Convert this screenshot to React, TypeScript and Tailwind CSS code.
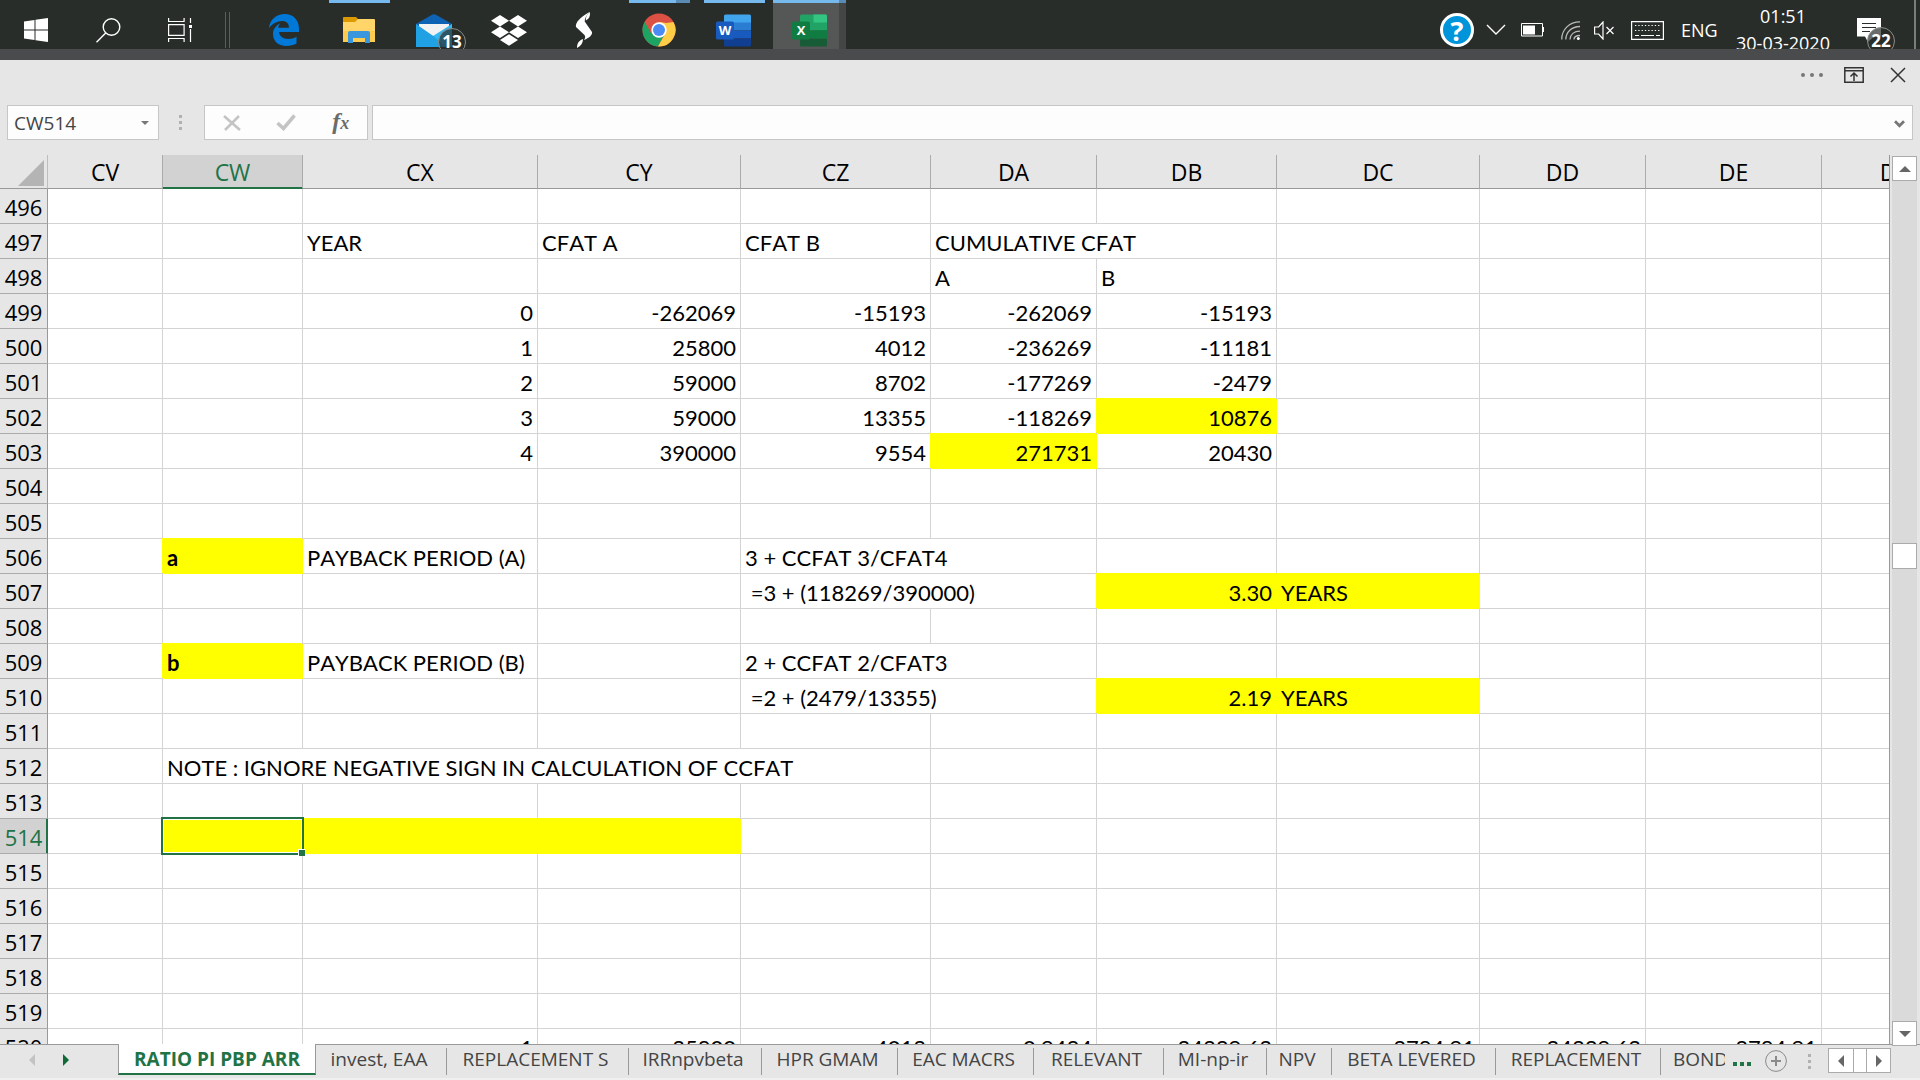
import React from "react";

type Cell = { t?: string; span?: number; right?: boolean; y?: boolean; bold?: boolean; sel?: boolean };

const columns = ["CV", "CW", "CX", "CY", "CZ", "DA", "DB", "DC", "DD", "DE", "DF"];

const n = (t: string): Cell => ({ t, right: true });

const cells: Record<number, Record<number, Cell>> = {
  497: { 2: { t: "YEAR" }, 3: { t: "CFAT A" }, 4: { t: "CFAT B" }, 5: { t: "CUMULATIVE CFAT", span: 2 } },
  498: { 5: { t: "A" }, 6: { t: "B" } },
  499: { 2: n("0"), 3: n("-262069"), 4: n("-15193"), 5: n("-262069"), 6: n("-15193") },
  500: { 2: n("1"), 3: n("25800"), 4: n("4012"), 5: n("-236269"), 6: n("-11181") },
  501: { 2: n("2"), 3: n("59000"), 4: n("8702"), 5: n("-177269"), 6: n("-2479") },
  502: { 2: n("3"), 3: n("59000"), 4: n("13355"), 5: n("-118269"), 6: { t: "10876", right: true, y: true } },
  503: { 2: n("4"), 3: n("390000"), 4: n("9554"), 5: { t: "271731", right: true, y: true }, 6: n("20430") },
  506: { 1: { t: "a", y: true, bold: true }, 2: { t: "PAYBACK PERIOD (A)" }, 4: { t: "3 + CCFAT 3/CFAT4", span: 2 } },
  507: { 4: { t: "\u00a0=3 + (118269/390000)", span: 2 }, 6: { t: "3.30", right: true, y: true }, 7: { t: "YEARS", y: true } },
  509: { 1: { t: "b", y: true, bold: true }, 2: { t: "PAYBACK PERIOD (B)" }, 4: { t: "2 + CCFAT 2/CFAT3", span: 2 } },
  510: { 4: { t: "\u00a0=2 + (2479/13355)", span: 2 }, 6: { t: "2.19", right: true, y: true }, 7: { t: "YEARS", y: true } },
  512: { 1: { t: "NOTE : IGNORE NEGATIVE SIGN IN CALCULATION OF CCFAT", span: 4 } },
  514: { 1: { y: true, sel: true }, 2: { y: true }, 3: { y: true } },
  520: { 2: n("1"), 3: n("25800"), 4: n("4012"), 5: n("0.9434"), 6: n("24339.62"), 7: n("3784.91"), 8: n("24339.62"), 9: n("3784.91") },
};

const rowNumbers = Array.from({ length: 25 }, (_, i) => 496 + i);

function GridRow({ row }: { row: number }) {
  const data = cells[row] ?? {};
  const out: React.ReactNode[] = [];
  let c = 0;
  while (c < columns.length) {
    const cell = data[c] ?? {};
    const span = cell.span ?? 1;
    out.push(
      <td
        key={c}
        colSpan={span}
        className={
          "relative h-[35px] whitespace-nowrap border-b border-r px-1 pt-1 leading-[30px] " +
          (cell.y ? "border-[#ffff00] bg-[#ffff00] shadow-[-1px_-1px_0_0_#ffff00] " : "border-[#d4d4d4] ") +
          (cell.right ? "text-right " : "text-left ") +
          (cell.bold ? "font-bold" : "")
        }
      >
        {cell.t}
        {cell.sel && (
          <span className="absolute -bottom-0.5 -left-0.5 -right-0.5 -top-0.5 z-10 border-2 border-[#217346]">
            <span className="absolute inset-0 border border-white" />
            <span className="absolute -bottom-[3px] -right-[3px] size-[7px] border-l border-t border-white bg-[#217346]" />
          </span>
        )}
      </td>,
    );
    c += span;
  }
  const active = row === 514;
  return (
    <tr>
      <th
        scope="row"
        className={
          "h-[35px] border-b border-r px-0 pb-0 pt-0.5 text-center font-['Open_Sans'] text-[22px] font-normal leading-[30px] " +
          (active ? "border-b-[#ababab] border-r-[#217346] bg-[#d2d2d2] text-[#217346] shadow-[inset_-1px_0_0_0_#217346]" : "border-b-[#ababab] border-r-[#999999] bg-[#e6e6e6] text-black")
        }
      >
        {row}
      </th>
      {out}
    </tr>
  );
}

function Edge() {
  return (
    <svg viewBox="0 0 30 32" className="h-8 w-[30px]">
      <path fill="#0078d7" d="M0 14C1 5 8 0 15.500 0 24 0 30 6 30 14.500V18H10c.2 4 4 7 9 7 3.500 0 6-1 8.500-2.300V29.500C25 31 21 32 17.500 32 9 32 4 27 4 20c0-5 3-8.500 7-10.500-1 1.300-1.500 2.500-1.700 4.300H20C20 10 18 7 13.500 7 8 7 3 10 0 14z" />
    </svg>
  );
}

function Folder() {
  return (
    <svg viewBox="0 0 32 26" className="h-[26px] w-8">
      <path fill="#dd9a00" d="M0 1a1 1 0 011-1h12l2 2v4H0z" />
      <path fill="#ffd468" d="M0 5h12l3-3h16a1 1 0 011 1v22H0z" />
      <path fill="#fac33a" d="M0 14h32v11H0z" opacity=".5" />
      <path fill="#3a96dd" d="M5 16a2 2 0 012-2h18a2 2 0 012 2v10h-5v-5H10v5H5z" />
    </svg>
  );
}

function Mail() {
  return (
    <svg viewBox="0 0 36 33" className="h-[33px] w-9">
      <path fill="#0f63b5" d="M0 10L16.500.6a3 3 0 013 0L36 10v6H0z" />
      <path fill="#f2f2f2" d="M3 10h30v12H3z" />
      <path fill="#4cc9f5" d="M36 10v23H20z" />
      <path fill="#1fa1e4" d="M0 10l33 23H0z" />
      <path fill="#35b8f1" d="M36 10L17 22l13 11h6z" />
    </svg>
  );
}

function Dropbox() {
  return (
    <svg viewBox="0 0 36 31" className="h-[31px] w-9" fill="#fff">
      <path d="M9 0l9 5.700-9 5.800-9-5.800zM27 0l9 5.700-9 5.800-9-5.800zM9 11.500l9 5.800L9 23l-9-5.700zM27 11.500l9 5.800-9 5.700-9-5.700zM18 19.300l9 5.700-9 5.700L9 25z" />
    </svg>
  );
}

function Spark() {
  return (
    <svg viewBox="0 0 18 36" className="h-9 w-[18px]" fill="#fff">
      <path d="M14.500 0C12 3 9.500 6 9.700 9.500L17 20c.6 3-3 6-8 8 1.500-2 1.500-3.500.5-5L1 15C0 11 5 5 14.500 0z" />
      <path d="M2 36c0-4 1-7 6-9C8 31 6 34 2 36z" />
      <path d="M14.800 0c.7 4-.8 7-4 8.500C10.500 5 12 2 14.800 0z" />
    </svg>
  );
}

function Chrome() {
  return (
    <svg viewBox="0 0 34 34" className="size-[34px]">
      <circle cx="17" cy="17" r="16.500" fill="#dd5144" />
      <path fill="#1da462" d="M2.700 8.700A16.500 16.500 0 0016 33.500l6.500-12.300L17 17l-7.500 4z" />
      <path fill="#ffcd46" d="M17 9h14.500A16.500 16.500 0 0116 33.500l7-12.500z" />
      <path fill="#dd5144" d="M17 9h14.500l-7 1z" />
      <circle cx="17" cy="17" r="7.700" fill="#fff" />
      <circle cx="17" cy="17" r="6" fill="#4c8bf5" />
    </svg>
  );
}

function Office({ letter, shades, box }: { letter: string; shades: string[]; box: string }) {
  return (
    <svg viewBox="0 0 36 33" className="h-[33px] w-9">
      <path fill={shades[0]} d="M8 8V2a1.500 1.500 0 011.500-1.500h24A1.500 1.500 0 0135 2v7H8z" />
      <path fill={shades[1]} d="M8 8.500h27v8H8z" />
      <path fill={shades[2]} d="M8 16.500h27v8H8z" />
      <path fill={shades[3]} d="M8 24.500h27V31a1.500 1.500 0 01-1.500 1.500h-24A1.500 1.500 0 018 31z" />
      {letter === "X" && <path fill="#33c481" d="M21.500.5h12A1.500 1.500 0 0135 2v6.500H21.500z" />}
      {letter === "X" && <path fill="#107c41" d="M21.500 16.500H35v8H21.500z" />}
      <rect y="7.500" width="18" height="18" rx="1.500" fill={box} />
      <text x="9" y="21" textAnchor="middle" fontFamily="Open Sans, sans-serif" fontWeight="700" fontSize="13" fill="#fff">{letter}</text>
    </svg>
  );
}

const iconButton = "flex items-center justify-center";

function Badge({ children, className }: { children: string; className: string }) {
  return (
    <span className={"absolute flex size-7 items-center justify-center rounded-full border border-[#8a8d8b] bg-[#2a2e2b]/70 font-['Open_Sans'] text-[17px] font-bold leading-[24px] text-white " + className}>
      {children}
    </span>
  );
}

function Taskbar() {
  return (
    <header className="relative flex h-[49px] shrink-0 overflow-hidden bg-[#292d2a] text-white">
      <button aria-label="Start" className={iconButton + " h-[60px] w-[72px]"}>
        <svg viewBox="0 0 24 24" className="size-6" fill="#fff">
          <path d="M0 3.400L10.500 2v9.500H0zM11.500 1.800L24 0v11.500H11.500zM0 12.500h10.500V22L0 20.600zM11.500 12.500H24V24l-12.500-1.800z" />
        </svg>
      </button>
      <button aria-label="Search" className={iconButton + " h-[60px] w-[72px]"}>
        <svg viewBox="0 0 25 25" className="size-[25px]" fill="none" stroke="#fff" strokeWidth="1.400">
          <circle cx="15.500" cy="9" r="8.300" />
          <path d="M9.700 15L.5 24.300" />
        </svg>
      </button>
      <button aria-label="Task view" className={iconButton + " h-[60px] w-[72px]"}>
        <svg viewBox="0 0 25 24" className="h-6 w-[25px]" fill="none" stroke="#fff" strokeWidth="1.200">
          <path d="M.6 0v3.500h15.500V0M.6 24v-3.500h15.500V24M.6 6.600h15.500v10.800H.6zM22.500 0v5M22.500 11v13" />
          <path fill="#fff" stroke="none" d="M21 7h3v3h-3z" />
        </svg>
      </button>
      <div className="ml-[9px] mt-3 h-9 w-[5px] border-x border-[#5c5f5d]" />
      <nav aria-label="Pinned apps" className="ml-4 flex">
        <button aria-label="Edge" className={iconButton + " h-[60px] w-[75px]"}><Edge /></button>
        <button aria-label="File Explorer" className={iconButton + " relative h-[60px] w-[75px]"}>
          <Folder />
          <span className="absolute left-2 top-0 h-[3px] w-[61px] bg-[#76b9ed]" />
        </button>
        <button aria-label="Mail" className={iconButton + " relative h-[60px] w-[75px]"}>
          <Mail />
          <Badge className="bottom-1 right-[5px]">13</Badge>
        </button>
        <button aria-label="Dropbox" className={iconButton + " h-[60px] w-[75px]"}><Dropbox /></button>
        <button aria-label="Spark" className={iconButton + " h-[60px] w-[75px]"}><Spark /></button>
        <button aria-label="Chrome" className={iconButton + " relative h-[60px] w-[75px]"}>
          <Chrome />
          <span className="absolute left-2 top-0 h-[3px] w-[61px] border-r-[14px] border-[#5a8bb5] bg-[#76b9ed]" />
        </button>
        <button aria-label="Word" className={iconButton + " relative h-[60px] w-[75px]"}>
          <Office letter="W" box="#185abd" shades={["#41a5ee", "#2b7cd3", "#185abd", "#103f91"]} />
          <span className="absolute left-2 top-0 h-[3px] w-[61px] bg-[#76b9ed]" />
        </button>
        <button aria-label="Excel" className={iconButton + " relative ml-0.5 h-[60px] w-[73px] bg-[#545755] shadow-[inset_-7px_0_0_0_#434644]"}>
          <Office letter="X" box="#107c41" shades={["#21a366", "#21a366", "#107c41", "#185c37"]} />
          <span className="absolute left-0 top-0 h-[3px] w-[73px] border-r-[7px] border-[#5a8bb5] bg-[#76b9ed]" />
        </button>
      </nav>
      <div className="ml-auto flex h-[60px] items-center font-['Open_Sans'] text-[18px]">
        <button aria-label="Help" className={iconButton + " mr-3 size-[34px] rounded-full border-[3px] border-white bg-[#0095da] text-[27px] font-bold leading-none"}>?</button>
        <button aria-label="Show hidden icons" className="mr-[15px]">
          <svg viewBox="0 0 20 12" className="h-3 w-5" fill="none" stroke="#fff" strokeWidth="1.400"><path d="M1 1l9 9 9-9" /></svg>
        </button>
        <svg viewBox="0 0 24 14" className="mr-4 h-[14px] w-6" fill="none" stroke="#fff"><path d="M.5.5h21v12.500H.5zM22.500 4v5" /><path fill="#fff" stroke="none" d="M2 2.500h12v9H2z" /></svg>
        <svg viewBox="0 0 19 19" className="mr-[14px] size-[19px]" fill="none" stroke="#b9bbba" strokeWidth="1.300">
          <path d="M.8 18.500C.5 9 8 .8 19 .8M4.800 18.500C5 11 10.500 5.500 19 5.500M9 18.500c.3-5 4-8.300 10-8.300M13 18.500c0-2 2-4 6-4" />
          <circle cx="17.300" cy="17.500" r="1.500" fill="#fff" stroke="none" />
        </svg>
        <svg viewBox="0 0 21 19" className="mr-4 h-[19px] w-[21px]" fill="none" stroke="#fff" strokeWidth="1.200"><path d="M.6 6h4L9 1v17l-4.400-5H.6zM12.500 6l7 7M19.500 6l-7 7" /></svg>
        <svg viewBox="0 0 33 19" className="mr-[17px] h-[19px] w-[33px]" fill="none" stroke="#fff" strokeWidth="1.200">
          <path d="M.6.6h31.800v17.800H.6z" />
          <path strokeDasharray="1.300 2" d="M4 4.500h25.500M4 9.500h25.500" />
          <path d="M4 14.500h4M10 14.500h13M25 14.500h4" />
        </svg>
        <span className="w-[35px]">ENG</span>
        <time className="ml-4 w-[102px] self-start pt-[3px] text-center leading-[27px]">01:51<br />30-03-2020</time>
        <button aria-label="Notifications" className="relative ml-[23px] mr-[27px] h-8 w-[30px]">
          <svg viewBox="0 0 24 24" className="size-6"><path fill="#fff" d="M0 0h24v18.500h-7L11 24l-3-5.500H0z" /><path stroke="#292d2a" d="M5 5.500h14M5 9.500h14M5 13.500h8" /></svg>
          <Badge className="-right-2 top-[13px]">22</Badge>
        </button>
        <span className="h-full w-1.5 border-l-2 border-[#7b7d7c]" />
      </div>
    </header>
  );
}

function FormulaBar() {
  return (
    <section className="flex h-[35px] shrink-0 pl-[7px] pr-[7px]">
      <div className="relative flex w-[152px] border border-[#c6c6c6] bg-[#fdfdfd]">
        <input aria-label="Name box" defaultValue="CW514" className="w-full bg-transparent pl-1.5 pt-0.5 font-['Open_Sans'] text-[19px] text-[#444444] outline-none" />
        <svg viewBox="0 0 8 4" className="absolute right-[9px] top-[15px] h-1 w-2"><path fill="#777" d="M0 0h8L4 4z" /></svg>
      </div>
      <div className="ml-[19px] mr-[21px] flex w-[5px] flex-col items-center justify-center gap-[3px]">
        <span className="size-[3px] bg-[#b1b1b1]" />
        <span className="size-[3px] bg-[#b1b1b1]" />
        <span className="size-[3px] bg-[#b1b1b1]" />
      </div>
      <div className="flex w-[164px] items-center justify-around border border-[#c6c6c6] bg-[#fdfdfd]">
        <button aria-label="Cancel"><svg viewBox="0 0 18 16" className="h-4 w-[18px]" stroke="#c4c4c4" strokeWidth="2.600"><path d="M1 1l16 14M16 1L2 15" /></svg></button>
        <button aria-label="Enter"><svg viewBox="0 0 20 17" className="h-[17px] w-5" fill="none" stroke="#c4c4c4" strokeWidth="3.600"><path d="M1.500 9l6 5.500L18.500 1.500" /></svg></button>
        <button aria-label="Insert function" className="pb-1 font-['Liberation_Serif'] text-[24px] font-bold italic leading-none text-[#6b6b6b]">f<span className="text-[18px]">x</span></button>
      </div>
      <div className="relative ml-1 flex flex-1 border border-[#c6c6c6] bg-[#fdfdfd]">
        <input aria-label="Formula" className="w-full bg-transparent px-2 outline-none" />
        <svg viewBox="0 0 11 8" className="absolute right-[7px] top-[14px] h-2 w-[11px]" fill="none" stroke="#777" strokeWidth="2.800"><path d="M1 1.200l4.500 4.500L10 1.200" /></svg>
      </div>
    </section>
  );
}

const tabs = [
  { t: "invest, EAA", w: "w-[131px]" },
  { t: "REPLACEMENT S", w: "w-[182px]" },
  { t: "IRRnpvbeta", w: "w-[133px]" },
  { t: "HPR GMAM", w: "w-[136px]" },
  { t: "EAC MACRS", w: "w-[136px]" },
  { t: "RELEVANT", w: "w-[130px]" },
  { t: "MI-np-ir", w: "w-[103px]" },
  { t: "NPV", w: "w-[65px]" },
  { t: "BETA LEVERED", w: "w-[164px]" },
  { t: "REPLACEMENT", w: "w-[165px]" },
];

const scrollButton = "flex items-center justify-center border border-[#ababab] bg-white";

function SheetTabs() {
  return (
    <footer className="flex h-9 shrink-0 border-b-2 border-[#f0f0f0] bg-[#e6e6e6] font-['Open_Sans'] text-[19px] text-[#444444]">
      <div className="flex w-[118px] items-center gap-7 border-t border-[#999999] pb-1 pl-[29px]">
        <button aria-label="Previous sheet"><svg viewBox="0 0 6 12" className="h-3 w-1.5"><path fill="#c3c3c3" d="M6 0v12L0 6z" /></svg></button>
        <button aria-label="Next sheet"><svg viewBox="0 0 6 12" className="h-3 w-1.5"><path fill="#0e6b38" d="M0 0v12l6-6z" /></svg></button>
      </div>
      <button className="mb-[3px] w-[198px] whitespace-nowrap border-x border-b-2 border-x-[#999999] border-b-[#217346] bg-white text-center font-bold leading-[28px] text-[#217346]">RATIO PI PBP ARR</button>
      <nav aria-label="Sheets" className="flex flex-1 border-t border-[#999999]">
        {tabs.map((tab, i) => (
          <button key={i} className={"mb-[3px] mt-[3px] whitespace-nowrap border-r border-[#999999] pb-[5px] pr-1 text-center leading-[22px] " + tab.w}>{tab.t}</button>
        ))}
        <button className="mb-[3px] ml-3 mt-[3px] w-[52px] overflow-hidden whitespace-nowrap pb-[5px] text-left leading-[22px]">BOND</button>
        <button aria-label="More sheets" className="ml-2 flex items-center gap-[3px] pt-1">
          <span className="size-[4px] bg-[#217346]" /><span className="size-[4px] bg-[#217346]" /><span className="size-[4px] bg-[#217346]" />
        </button>
        <button aria-label="New sheet" className="ml-[14px] pb-1 pt-[3px]">
          <svg viewBox="0 0 22 22" className="size-[22px]" fill="none" stroke="#8a8a8a"><circle cx="11" cy="11" r="10.400" /><path strokeWidth="2" d="M6 11h10M11 6v10" /></svg>
        </button>
        <div className="ml-auto mr-[17px] flex flex-col justify-center gap-[3px]">
          <span className="size-[3px] bg-[#b1b1b1]" /><span className="size-[3px] bg-[#b1b1b1]" /><span className="size-[3px] bg-[#b1b1b1]" />
        </div>
        <div className="mr-[29px] mt-[3px] flex h-[25px]">
          <button aria-label="Scroll left" className={scrollButton + " w-[26px]"}><svg viewBox="0 0 6 12" className="h-3 w-1.5"><path fill="#666" d="M6 0v12L0 6z" /></svg></button>
          <span className="w-3 border-y border-[#ababab] bg-white" />
          <button aria-label="Scroll right" className={scrollButton + " w-[25px]"}><svg viewBox="0 0 6 12" className="h-3 w-1.5"><path fill="#666" d="M0 0v12l6-6z" /></svg></button>
        </div>
      </nav>
    </footer>
  );
}

export default function App() {
  return (
    <div className="flex h-screen flex-col overflow-hidden bg-[#e6e6e6] font-['Lato',sans-serif] text-black [font-kerning:none]">
      <Taskbar />
      <div className="h-[11px] shrink-0 bg-[#4a4b4d]" />
      <div className="flex h-[45px] shrink-0 items-start justify-end pr-[14px] pt-[7px]">
        <button aria-label="More options" className="mr-[21px] mt-1.5 flex gap-[5px]">
          <span className="size-1 rounded-full bg-[#777]" /><span className="size-1 rounded-full bg-[#777]" /><span className="size-1 rounded-full bg-[#777]" />
        </button>
        <button aria-label="Ribbon display" className="mr-[26px]">
          <svg viewBox="0 0 20 16" className="h-4 w-5" fill="none" stroke="#333" strokeWidth="1.500"><path d="M.8.8h18.400v14.400H.8zM.8 3.800h18.400M10 14V6.500M6.500 9.500L10 6l3.500 3.500" /></svg>
        </button>
        <button aria-label="Close">
          <svg viewBox="0 0 16 16" className="size-4" stroke="#333" strokeWidth="1.500"><path d="M1 1l14 14M15 1L1 15" /></svg>
        </button>
      </div>
      <FormulaBar />
      <main className="mt-[15px] flex min-h-0 flex-1">
        <div className="min-w-0 flex-1 overflow-hidden border-r border-[#999999]">
          <table className="w-[1967px] table-fixed border-separate border-spacing-0 bg-white text-[22px]">
            <colgroup>
              <col className="w-[48px]" />
              <col className="w-[115px]" />
              <col className="w-[140px]" />
              <col className="w-[235px]" />
              <col className="w-[203px]" />
              <col className="w-[190px]" />
              <col className="w-[166px]" />
              <col className="w-[180px]" />
              <col className="w-[203px]" />
              <col className="w-[166px]" />
              <col className="w-[176px]" />
              <col className="w-[145px]" />
            </colgroup>
            <thead>
              <tr className="h-[34px]">
                <th aria-label="Select all" className="border-b border-r border-b-[#999999] border-r-[#bdbdbd] bg-[#e6e6e6] p-0">
                  <svg viewBox="0 0 26 26" className="ml-auto mr-[3px] mt-[3px] size-[26px]"><path fill="#b4b4b4" d="M26 0v26H0z" /></svg>
                </th>
                {columns.map((c) => (
                  <th
                    key={c}
                    scope="col"
                    className={
                      "border-b border-r p-0 font-['Open_Sans'] text-[23px] font-normal leading-[32px] " +
                      (c === "CW" ? "border-b-[#217346] border-r-[#ababab] bg-[#d2d2d2] text-[#217346] shadow-[inset_0_-1px_0_0_#217346]" : "border-b-[#999999] border-r-[#ababab] bg-[#e6e6e6]")
                    }
                  >
                    {c}
                  </th>
                ))}
              </tr>
            </thead>
            <tbody>
              {rowNumbers.map((r) => (
                <GridRow key={r} row={r} />
              ))}
            </tbody>
          </table>
        </div>
        <div className="-mb-0.5 ml-[2px] mr-[3px] mt-px flex w-[25px] flex-col bg-[#dadada]">
          <button aria-label="Scroll up" className={scrollButton + " h-[25px]"}><svg viewBox="0 0 12 6" className="h-1.5 w-3"><path fill="#666" d="M0 6h12L6 0z" /></svg></button>
          <div className="flex-[4]" />
          <div className="h-[26px] border border-[#ababab] bg-white" />
          <div className="flex-[5]" />
          <button aria-label="Scroll down" className={scrollButton + " relative z-10 h-[25px]"}><svg viewBox="0 0 12 6" className="h-1.5 w-3"><path fill="#666" d="M0 0h12L6 6z" /></svg></button>
        </div>
      </main>
      <SheetTabs />
    </div>
  );
}
